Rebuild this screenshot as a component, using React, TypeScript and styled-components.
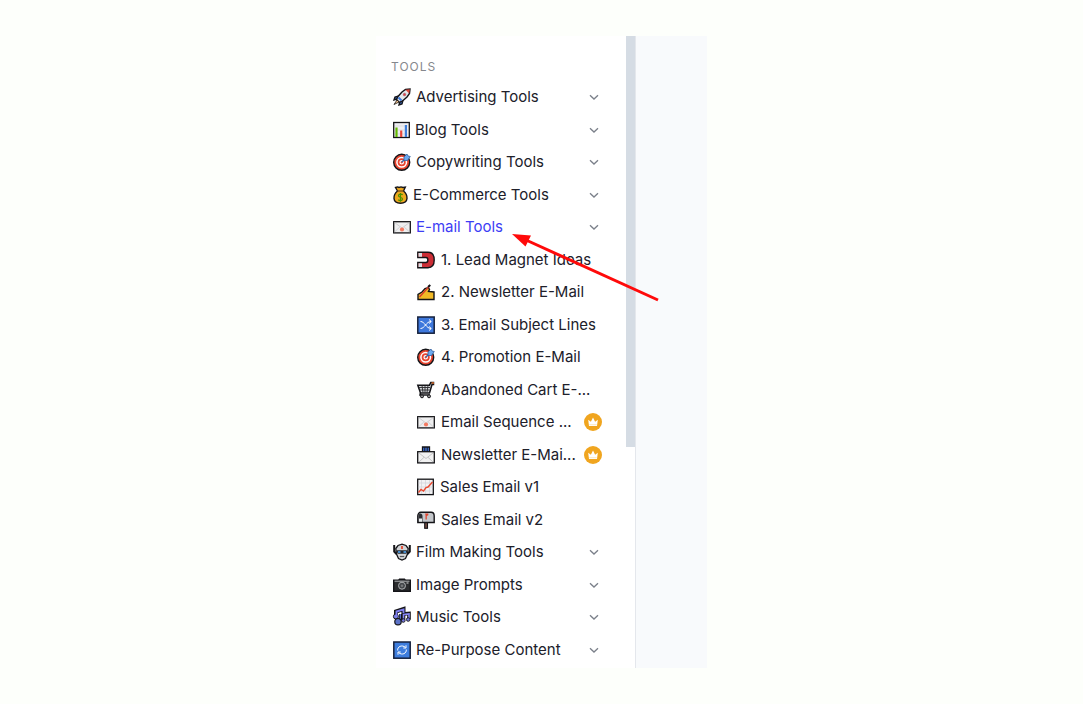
import React from 'react';
import styled, { createGlobalStyle } from 'styled-components';

const GlobalStyle = createGlobalStyle`
  * { box-sizing: border-box; }
  body {
    margin: 0;
    background: #fdfffb;
    font-family: Inter, "Liberation Sans", sans-serif;
    font-size: 15px;
    line-height: 1.5;
    color: #20202a;
  }
`;

const Page = styled.main`
  min-height: 100vh;
  display: flex;
  justify-content: center;
  align-items: center;
  padding: 36px 16px;
`;

const Panel = styled.div`
  position: relative;
  display: flex;
  width: 100%;
  max-width: 331px;
  background: #f8fafc;
`;

const Sidebar = styled.aside`
  display: flex;
  flex: 0 0 260px;
  background: #ffffff;
  border-right: 1px solid #e4e7ec;
`;

const Nav = styled.nav`
  flex: 1;
  min-width: 0;
  padding: 21px 24px 2px 15px;
`;

const Heading = styled.h2`
  margin: 0 0 4px;
  font-size: 12px;
  line-height: 20px;
  font-weight: 400;
  letter-spacing: 1px;
  color: #85878d;
`;

const ScrollThumb = styled.div`
  width: 9px;
  height: 65%;
  background: #d5dce4;
`;

const List = styled.ul<{ $nested?: boolean }>`
  list-style: none;
  margin: 0;
  padding: 0 0 0 ${(p) => (p.$nested ? 24 : 2)}px;
`;

const GroupButton = styled.button<{ $active?: boolean }>`
  display: flex;
  align-items: center;
  gap: 5px;
  width: 100%;
  padding: 5px 3px 5px 0;
  border: 0;
  background: none;
  font: inherit;
  text-align: left;
  color: ${(p) => (p.$active ? '#3d3df5' : 'inherit')};
  cursor: pointer;
`;

const ToolLink = styled.a`
  display: flex;
  align-items: center;
  gap: 6px;
  padding: 5px 0;
  color: inherit;
  text-decoration: none;
`;

const Label = styled.span`
  flex: 1;
  min-width: 0;
  white-space: nowrap;
`;

const Glyph = styled.svg`
  flex: none;
  display: block;
  overflow: visible;
`;

const Badge = styled.span`
  display: grid;
  place-items: center;
  flex: none;
  width: 18px;
  height: 18px;
  border-radius: 50%;
  background: #f0a51f;
`;

const Arrow = styled.svg`
  position: absolute;
  left: 136px;
  top: 198px;
  pointer-events: none;
`;

const K = '#141418';

const art: Record<string, { w: number; body: React.ReactNode }> = {
  rocket: {
    w: 18,
    body: (
      <>
        <path d="M6 8 2 9 1 12 4 11M10 12 9 16 6 17 7 13" fill="#3d7be0" stroke={K} strokeWidth="1.4" />
        <path d="M3.500 11.500 5 8.500 9 4 12.500 1.500 17 1 16.500 5.500 14 9 9.500 13 6.500 14.500Z" fill="#e6e8ec" stroke={K} strokeWidth="1.4" />
        <path d="M12.500 1.800 16.800 1.200 16.200 5.500Z" fill="#e0443a" />
        <circle cx="11.500" cy="6.500" r="1.500" fill="#db3f49" stroke="#999" strokeWidth=".5" />
        <path d="M5.500 9.500 8.500 12.500" stroke="#3d7be0" strokeWidth="2" />
        <path d="M4 12 1 16.500 6 14Z" fill="#f6c48a" stroke={K} strokeWidth=".8" />
      </>
    ),
  },
  bars: {
    w: 17,
    body: (
      <>
        <rect x=".7" y="1.500" width="15.600" height="15" fill="#eeeef2" stroke={K} strokeWidth="1.300" />
        <path d="M2 5H15M2 9H15M2 13H15" stroke="#d2d3d9" strokeWidth=".7" />
        <path d="M3.500 6.500V16" stroke="#63b900" strokeWidth="2.200" />
        <path d="M8.200 9.500V16" stroke="#e8473a" strokeWidth="2.200" />
        <path d="M12.900 4V16" stroke="#3c7cdb" strokeWidth="2.200" />
      </>
    ),
  },
  target: {
    w: 18,
    body: (
      <>
        <circle cx="8.700" cy="9.300" r="8" fill="#e8442f" stroke={K} strokeWidth="1.400" />
        <circle cx="8.700" cy="9.300" r="4.800" fill="#e8442f" stroke="#fff" strokeWidth="1.500" />
        <circle cx="8.700" cy="9.300" r="1.700" fill="#e8442f" stroke="#fff" strokeWidth="1.200" />
        <path d="M8.700 9.300 13 5" stroke="#3566a8" strokeWidth="1.300" />
        <path d="M11 7.500V4L14 1 15 3 17.300 3.500 14.500 7.500Z" fill="#6ca9ef" stroke="#345f9e" strokeWidth=".8" />
      </>
    ),
  },
  money: {
    w: 15,
    body: (
      <>
        <path d="M4.500 5 2.500 1.500 4.500 .900 6 1.500 8 .900 10 1.500 12.300 1.200 10.500 5C13 7 14.200 9.500 14 12.500 13.700 16 11.500 17.200 7.500 17.200S1.300 16 1 12.500C.800 9.500 2 7 4.500 5Z" fill="#eda81f" stroke={K} strokeWidth="1.400" />
        <path d="M4.500 5H10.500" stroke="#7a5019" strokeWidth="1.300" />
        <path d="M9.700 8.700C8.500 7.700 5.500 8 5.500 9.800S9.500 11 9.500 13 6.500 15 5.200 13.800M7.500 7V15.700" fill="none" stroke="#4a9200" strokeWidth="1.200" />
      </>
    ),
  },
  envelope: {
    w: 18,
    body: (
      <>
        <rect x=".700" y="3.700" width="16.600" height="11.200" fill="#eeeeef" stroke={K} strokeWidth="1.300" />
        <path d="M1.500 4.500 9 10 16.500 4.500M1.500 14 6.800 9M16.500 14 11.200 9" fill="none" stroke="#c6c6c9" strokeWidth=".800" />
        <circle cx="9" cy="11.500" r="2.100" fill="#f47a61" />
      </>
    ),
  },
  magnet: {
    w: 18,
    body: (
      <>
        <path d="M.800 1.300H11C15 1.300 17.200 4 17.200 9S15 16.700 11 16.700H.800V11.500H9C11.500 11.500 11.500 6.500 9 6.500H.800Z" fill="#cc2d35" stroke={K} strokeWidth="1.400" />
        <path d="M1.500 2H5V5.800H1.500ZM1.500 12.200H5V16H1.500Z" fill="#d9dce0" />
      </>
    ),
  },
  writing: {
    w: 18,
    body: (
      <>
        <path d="M1 16.500V11.500L5 9 8 5.500 11.500 4.500 12.500 6.500 11.500 8.500 17 9V16.500Z" fill="#f1b926" stroke={K} strokeWidth="1.400" />
        <path d="M2.500 14 12.500 3" stroke="#d93b2d" strokeWidth="1.400" />
        <path d="M11 4 13.300 2" stroke={K} strokeWidth="2" />
      </>
    ),
  },
  shuffle: {
    w: 18,
    body: (
      <>
        <rect x=".800" y="1" width="16.400" height="16.200" fill="#3e78dc" stroke="#16213c" strokeWidth="1.500" />
        <path d="M3.500 5.500C8 5.500 9 12.500 14 12.500M3.500 12.500C8 12.500 9 5.500 14 5.500M12 3.500 14.300 5.500 12 7.500M12 10.500 14.300 12.500 12 14.500" fill="none" stroke="#fff" strokeWidth="1" />
      </>
    ),
  },
  cart: {
    w: 18,
    body: (
      <>
        <path d="M.800 4.200H12.500L13.800 1.500H16.500V3.500H15L12.500 12H3.500Z" fill="#d7d9dc" stroke={K} strokeWidth="1.500" />
        <path d="M2 6.500H13M3 9H12.500M5 4.500 6 11.500M8 4.500V11.500M11 4.500 10 11.500" stroke="#2a2a2e" strokeWidth=".900" />
        <path d="M3.500 12 3 14H13" fill="none" stroke={K} strokeWidth="1.500" />
        <circle cx="5" cy="15.300" r="1.500" fill="#999" stroke={K} />
        <circle cx="12" cy="15.300" r="1.500" fill="#999" stroke={K} />
        <path d="M14.500 2H17" stroke="#b65a24" strokeWidth="1.800" />
      </>
    ),
  },
  inbox: {
    w: 18,
    body: (
      <>
        <path d="M5.500 7V1H12.500V7" fill="#4174dc" stroke={K} strokeWidth="1.300" />
        <path d="M7.800 1V6M10.200 1V6" stroke={K} />
        <rect x=".700" y="5.700" width="16.600" height="11.200" fill="#f1f1f1" stroke={K} strokeWidth="1.300" />
        <path d="M2 7 9 12.500 16 7M2 16 7 11.300M16 16 11 11.300" fill="none" stroke="#bebec1" strokeWidth=".900" />
      </>
    ),
  },
  trend: {
    w: 17,
    body: (
      <>
        <rect x=".700" y="1.200" width="15.600" height="15.400" fill="#f2f2f4" stroke={K} strokeWidth="1.300" />
        <path d="M4.500 2V16M8.500 2V16M12.500 2V16M1.500 5H15.500M1.500 9H15.500M1.500 13H15.500" stroke="#d1d2d7" strokeWidth=".700" />
        <path d="M1.500 14.500 4 11.500 6.500 13 9 9.500 11 9 15.500 4" fill="none" stroke="#e9492f" strokeWidth="1.400" />
      </>
    ),
  },
  mailbox: {
    w: 18,
    body: (
      <>
        <rect x="7.700" y="11" width="2.800" height="6.300" fill="#6f4a40" stroke={K} strokeWidth="1.100" />
        <path d="M4 1.300H14C16 1.300 17.200 3 17.200 5V11.500H.800V5C.800 3 2 1.300 4 1.300Z" fill="#c4c7cb" stroke={K} strokeWidth="1.400" />
        <path d="M1.500 11V5C1.500 1.500 5.500 1.500 5.500 5V11Z" fill="#2c2d31" />
        <path d="M2 7.500H5V10.800H2Z" fill="#e9ebed" />
        <path d="M8 2.500H11.300V4.200L9.800 5V8.500H8.500V4Z" fill="#e24730" />
      </>
    ),
  },
  robot: {
    w: 18,
    body: (
      <>
        <path d="M1.200 2V8.500L4 11.500M16.800 2V8.500L14 11.500" fill="none" stroke={K} strokeWidth="2" />
        <path d="M2.800 5.500 5 2.500 9 1.200 13 2.500 15.200 5.500 14.500 11 12.500 15.500 9 17 5.500 15.500 3.500 11Z" fill="#d3d5d8" stroke={K} strokeWidth="1.300" />
        <path d="M3.500 7.200H14.500L13.500 10.800H4.500Z" fill="#23262d" />
        <path d="M5 9H7.500M10.500 9H13" stroke="#51adff" strokeWidth="1.600" />
        <path d="M9 3V6" stroke="#e5482f" strokeWidth="1.800" />
        <path d="M6.800 13.500H11.200" stroke="#55585e" strokeWidth="1.200" />
      </>
    ),
  },
  camera: {
    w: 18,
    body: (
      <>
        <path d="M.700 4.200H5.500L6.500 3.200H11.500L12.500 4.200H17.300V15.300H.700Z" fill="#2b2c2e" stroke={K} strokeWidth="1.400" />
        <path d="M1.500 5.200H16.500" stroke="#a7a9ab" strokeWidth="1.100" />
        <circle cx="9" cy="9.700" r="3.500" fill="#44474a" stroke="#aeb0b2" strokeWidth="1" />
        <circle cx="9" cy="9.700" r="1.300" fill="#77797b" />
        <path d="M13.500 7H15.500" stroke="#ddd" />
      </>
    ),
  },
  music: {
    w: 18,
    body: (
      <>
        <path d="M3 8V3.500L10.500 1V7.500" fill="none" stroke={K} strokeWidth="4" />
        <path d="M10.500 11.500V6L16 5.500V11.500" fill="none" stroke={K} strokeWidth="3.600" />
        <circle cx="2.900" cy="8.500" r="2.500" fill="#7b7fe6" stroke={K} />
        <path d="M3.500 8V3.500L10.500 1.500V5" fill="none" stroke="#7f7ff0" strokeWidth="1.900" />
        <path d="M10.500 12V6.500L16 6V11" fill="none" stroke="#8585f2" strokeWidth="1.600" />
        <path d="M7.500 13V6" stroke={K} strokeWidth="3" />
        <path d="M7.300 13V6" stroke="#5a70cc" strokeWidth="1.300" />
        <circle cx="5" cy="13.700" r="3.200" fill="#5b72c8" stroke={K} strokeWidth="1.200" />
        <circle cx="10.300" cy="12.500" r="1.800" fill="#7377da" stroke={K} strokeWidth=".9" />
        <circle cx="15.200" cy="11.500" r="1.800" fill="#7377da" stroke={K} strokeWidth=".9" />
      </>
    ),
  },
  repeat: {
    w: 18,
    body: (
      <>
        <rect x=".800" y="1" width="16.400" height="16.200" fill="#3e7ddd" stroke="#16213c" strokeWidth="1.500" />
        <path d="M4.700 9.500C4.200 5.500 9 3.500 12.300 6.300M13.300 8.500C13.800 12.500 9 14.500 5.700 11.700M13 4.300V7H10.300M5 13.700V11H7.700" fill="none" stroke="#fff" strokeWidth="1" />
      </>
    ),
  },
};

const Icon = ({ name }: { name: string }) => (
  <Glyph width={art[name].w} height="18" viewBox={`0 0 ${art[name].w} 18`} aria-hidden="true">
    {art[name].body}
  </Glyph>
);

const Chevron = () => (
  <Glyph width="10" height="10" viewBox="0 0 10 10" fill="none" stroke="#7b808a" strokeWidth="1.300" aria-hidden="true">
    <path d="M1 3.200 5 7 9 3.200" />
  </Glyph>
);

const Crown = () => (
  <Badge role="img" aria-label="Premium">
    <Glyph width="10" height="10" viewBox="0 0 10 10" fill="#fff">
      <path d="M.200 2.800 2.900 4.800 5 .600 7.100 4.800 9.800 2.800 9 9H1Z" />
      <path d="M1.200 7.700H8.800" stroke="#f8d694" strokeWidth=".6" />
    </Glyph>
  </Badge>
);

type Tool = { icon: string; label: string; premium?: boolean };
type Group = { icon: string; label: string; tools?: Tool[] };

const groups: Group[] = [
  { icon: 'rocket', label: 'Advertising Tools' },
  { icon: 'bars', label: 'Blog Tools' },
  { icon: 'target', label: 'Copywriting Tools' },
  { icon: 'money', label: 'E-Commerce Tools' },
  {
    icon: 'envelope',
    label: 'E-mail Tools',
    tools: [
      { icon: 'magnet', label: '1. Lead Magnet Ideas' },
      { icon: 'writing', label: '2. Newsletter E-Mail' },
      { icon: 'shuffle', label: '3. Email Subject Lines' },
      { icon: 'target', label: '4. Promotion E-Mail' },
      { icon: 'cart', label: 'Abandoned Cart E-...' },
      { icon: 'envelope', label: 'Email Sequence ...', premium: true },
      { icon: 'inbox', label: 'Newsletter E-Mai...', premium: true },
      { icon: 'trend', label: 'Sales Email v1' },
      { icon: 'mailbox', label: 'Sales Email v2' },
    ],
  },
  { icon: 'robot', label: 'Film Making Tools' },
  { icon: 'camera', label: 'Image Prompts' },
  { icon: 'music', label: 'Music Tools' },
  { icon: 'repeat', label: 'Re-Purpose Content' },
];

export default function App() {
  return (
    <>
      <GlobalStyle />
      <Page>
        <Panel>
          <Sidebar>
            <Nav aria-label="Tools">
              <Heading>TOOLS</Heading>
              <List>
                {groups.map((group) => (
                  <li key={group.label}>
                    <GroupButton type="button" $active={!!group.tools} aria-expanded={!!group.tools}>
                      <Icon name={group.icon} />
                      <Label>{group.label}</Label>
                      <Chevron />
                    </GroupButton>
                    {group.tools && (
                      <List $nested>
                        {group.tools.map((tool) => (
                          <li key={tool.label}>
                            <ToolLink href="#">
                              <Icon name={tool.icon} />
                              <Label>{tool.label}</Label>
                              {tool.premium && <Crown />}
                            </ToolLink>
                          </li>
                        ))}
                      </List>
                    )}
                  </li>
                ))}
              </List>
            </Nav>
            <ScrollThumb />
          </Sidebar>
          <Arrow width="148" height="70" viewBox="0 0 148 70" aria-hidden="true">
            <path d="M14 6 146 66" stroke="#ff0a0a" strokeWidth="3" />
            <path d="M0 0 19 1.500 13.500 12.500Z" fill="#ff0a0a" />
          </Arrow>
        </Panel>
      </Page>
    </>
  );
}
